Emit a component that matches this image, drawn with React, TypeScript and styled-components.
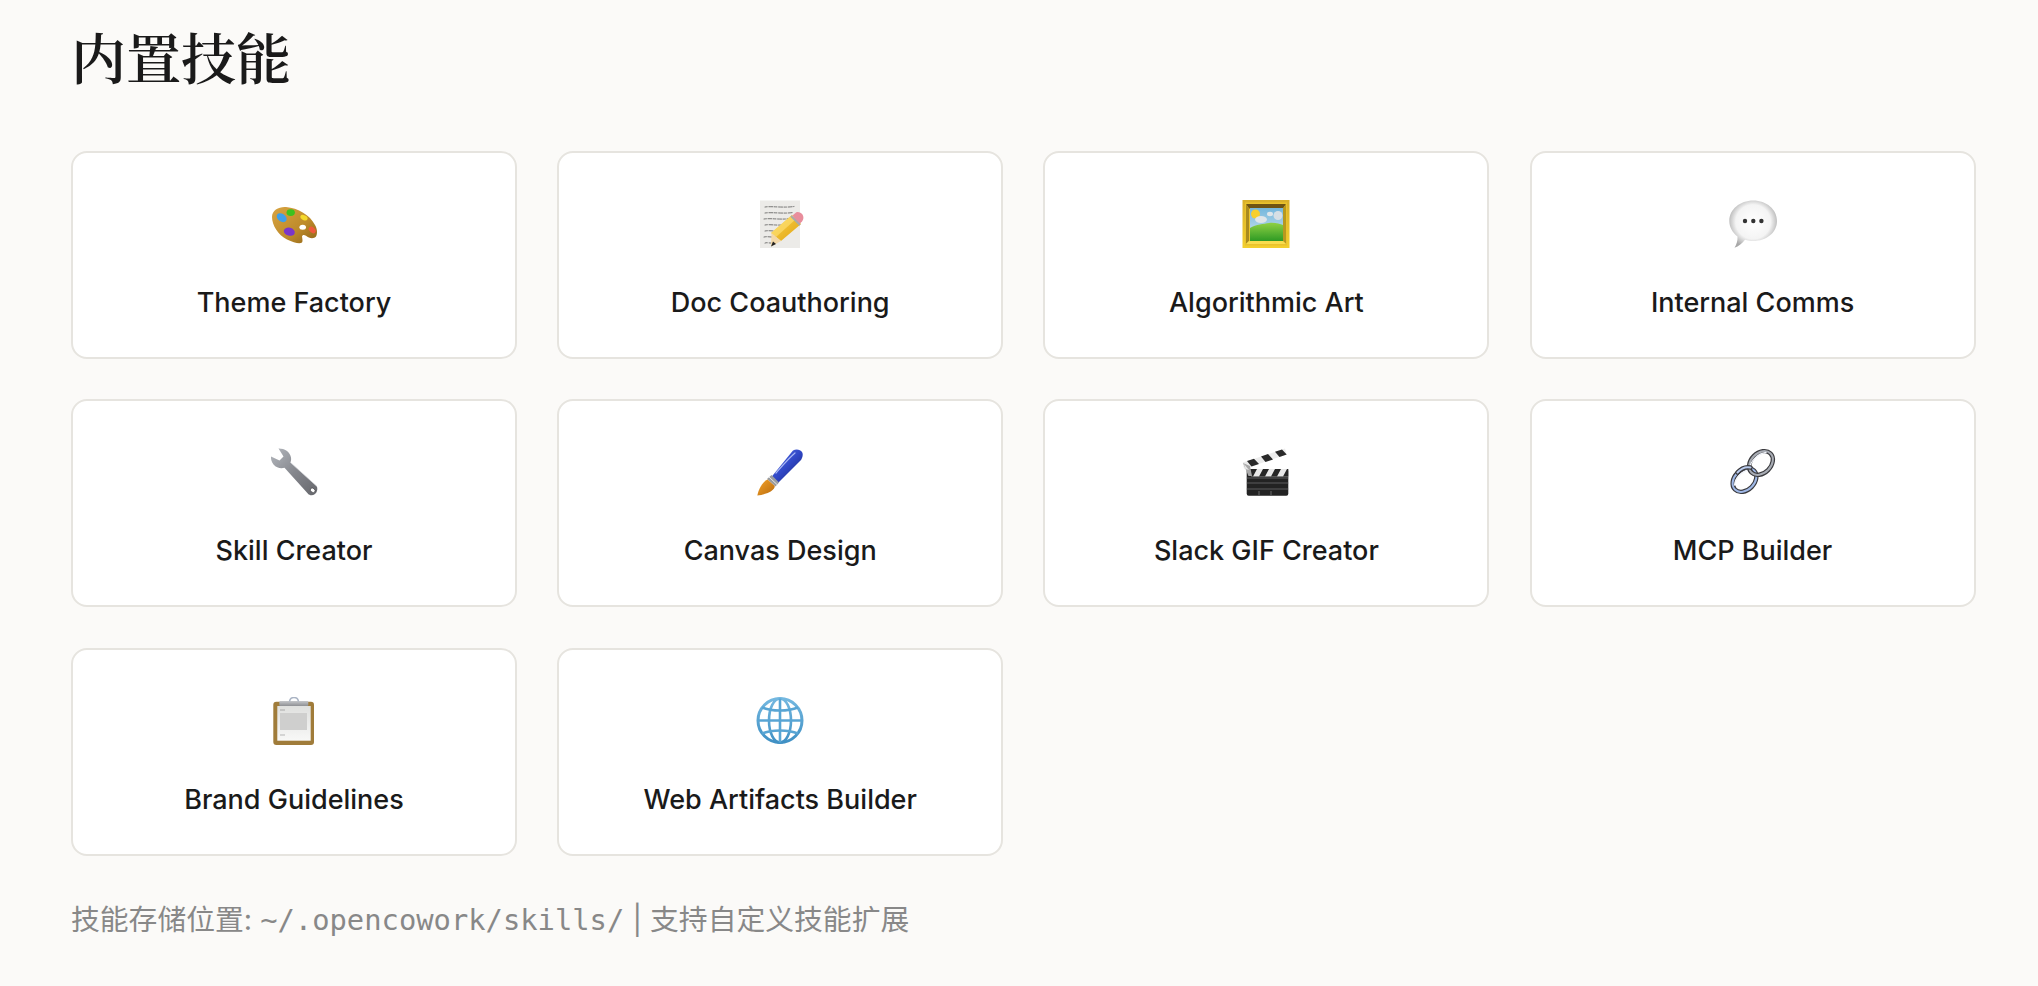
import { ReactNode } from 'react';
import styled, { createGlobalStyle } from 'styled-components';

const GlobalStyle = createGlobalStyle`
  html, body {
    margin: 0;
    padding: 0;
    background: #fbfaf8;
  }
`;

const Palette = () => (
  <svg viewBox="0 0 48 48" width="48" height="48">
    <defs>
      <linearGradient id="wood" x1="0" y1="0" x2="1" y2="1">
        <stop offset="0" stopColor="#d9a441" />
        <stop offset="0.6" stopColor="#bd8a2a" />
        <stop offset="1" stopColor="#8f6518" />
      </linearGradient>
    </defs>
    <path
      d="M2 17C2 10 9 6.500 16 7C28 8 40 15 45 25C47.500 29 47.500 34 46 36.500C44 39 39 38.500 36 35.800C34 34.500 32.500 34.800 32 36.500C32.300 39 33 41 32 42.500C30 44 24 43 17 39.500C8 35 2 25 2 17Z"
      fill="url(#wood)"
    />
    <ellipse cx="11.700" cy="17.700" rx="5.500" ry="3.800" transform="rotate(35 11.700 17.700)" fill="#3f9fe8" />
    <ellipse cx="20.700" cy="12.600" rx="4.200" ry="3.400" fill="#3cc21e" />
    <ellipse cx="34" cy="17.700" rx="3.800" ry="2.400" transform="rotate(25 34 17.700)" fill="#f4d92c" />
    <ellipse cx="32.700" cy="27.300" rx="3.300" ry="2.500" fill="#ffffff" />
    <ellipse cx="42.300" cy="30" rx="3.900" ry="2.700" transform="rotate(40 42.300 30)" fill="#ef5a3c" />
    <ellipse cx="19.300" cy="31.700" rx="5.600" ry="4" transform="rotate(15 19.300 31.700)" fill="#7b36c8" />
  </svg>
);

const Memo = () => (
  <svg viewBox="0 0 48 48" width="48" height="48">
    <defs>
      <linearGradient id="pencilBody" x1="0" y1="0" x2="1" y2="1">
        <stop offset="0" stopColor="#fbd44a" />
        <stop offset="1" stopColor="#e0a313" />
      </linearGradient>
    </defs>
    <rect x="4" y="0.500" width="40" height="47.500" fill="#ecebe8" />
    <g stroke="#3f3f3f" strokeWidth="0.800" strokeLinecap="round" strokeDasharray="2.500 1.600 4 1.400" fill="none" opacity="0.850">
      <path d="M9 7C15 6 28 8 38 6.500" />
      <path d="M9 13C16 12 28 14 37 12.500" />
      <path d="M8 19C16 18 24 20 35 18.500" />
      <path d="M9 25C14 24 22 26 30 24.500" />
      <path d="M9 31C14 30 20 32 26 30.500" />
      <path d="M8 37C12 36 17 38 22 36.500" />
      <path d="M9 43C11 42 15 44 18 42.500" />
    </g>
    <path d="M36 15L45 24L25 41L15 33Z" fill="url(#pencilBody)" />
    <path d="M36 15L40 19L20 37L15 33Z" fill="#ffe27a" opacity="0.600" />
    <path d="M15.500 33L25 41L15 46.500Z" fill="#f3d8a8" />
    <path d="M17 41.500L20 44L15 46.500Z" fill="#222" />
    <path d="M36.500 15.500L40 12.500C42 11.500 45 12.500 46.500 14.500C47.800 16.500 47.800 19.500 46 21.500L43 24.500Z" fill="#e88d9c" />
    <path d="M35 16L44 25" stroke="#a9a9a9" strokeWidth="2" />
  </svg>
);

const Framed = () => (
  <svg viewBox="0 0 48 48" width="48" height="48">
    <defs>
      <linearGradient id="sky" x1="0" y1="0" x2="0" y2="1">
        <stop offset="0" stopColor="#74b7dd" />
        <stop offset="1" stopColor="#d5e6ee" />
      </linearGradient>
      <linearGradient id="grass" x1="0" y1="0" x2="0" y2="1">
        <stop offset="0" stopColor="#8fd044" />
        <stop offset="1" stopColor="#2e9a24" />
      </linearGradient>
      <linearGradient id="gold" x1="0" y1="0" x2="0" y2="1">
        <stop offset="0" stopColor="#d9b02a" />
        <stop offset="1" stopColor="#f3cf2e" />
      </linearGradient>
    </defs>
    <rect x="0.500" y="0" width="47" height="48" fill="url(#gold)" />
    <rect x="3" y="2.500" width="42" height="43" fill="#e9c22c" />
    <path d="M4 4H44L41 8.500H7Z" fill="#6f5413" />
    <path d="M4 4V44L7 41V8.500Z" fill="#a98a1e" />
    <path d="M44 4V44L41 41V8.500Z" fill="#b8981f" />
    <path d="M4 44H44L41 41H7Z" fill="#f8dc4e" />
    <rect x="8" y="8" width="33" height="33" fill="url(#sky)" />
    <circle cx="13.500" cy="14" r="4.500" fill="#f7cf2c" />
    <ellipse cx="19" cy="19.500" rx="6" ry="3.500" fill="#dfe5e9" />
    <ellipse cx="28" cy="14" rx="3" ry="2.200" fill="#dfe6ea" />
    <ellipse cx="36" cy="15.500" rx="4.500" ry="4.500" fill="#d6dfe5" />
    <path d="M8 28C14 24 22 24 27 23C32 22 38 24 41 25V41H8Z" fill="url(#grass)" />
  </svg>
);

const Speech = () => (
  <svg viewBox="0 0 48 48" width="48" height="48">
    <defs>
      <radialGradient id="bubble" cx="0.500" cy="0.450" r="0.560">
        <stop offset="0" stopColor="#ffffff" />
        <stop offset="0.650" stopColor="#f4f4f4" />
        <stop offset="1" stopColor="#a8a8a8" />
      </radialGradient>
    </defs>
    <path
      d="M24.200 0.600C37.500 0.600 48 9.500 48 21C48 32.500 37.500 41 24.200 41C21.500 41 18.500 40.700 16 39.800C13.500 43 9.500 46.500 5.500 47.800C7.500 44.500 8.800 40.500 8.500 36.500C3.500 32.500 0.300 27 0.300 21C0.300 9.500 11 0.600 24.200 0.600Z"
      fill="url(#bubble)"
    />
    <circle cx="16" cy="21" r="2.200" fill="#333" />
    <circle cx="24.300" cy="21" r="2.200" fill="#333" />
    <circle cx="32.400" cy="21" r="2.200" fill="#333" />
  </svg>
);

const Wrench = () => (
  <svg viewBox="0 0 48 48" width="48" height="48">
    <defs>
      <linearGradient id="steel" x1="0" y1="0" x2="1" y2="1">
        <stop offset="0" stopColor="#b4b8be" />
        <stop offset="0.500" stopColor="#85878d" />
        <stop offset="1" stopColor="#66676c" />
      </linearGradient>
    </defs>
    <path
      d="M8.500 0.500C14 0.300 20 3.500 21 9.500C21.300 11.500 21 13 20.500 14.500L46.500 38C48 40 47.500 44 45 46C42.500 48 39.500 47.500 38 45.800L14.500 19.800C11 21 6.500 20 3.500 16.500C1.500 14 0.800 11 1 8.500L9.500 12.500L13.500 8.500Z"
      fill="url(#steel)"
    />
    <path d="M20.500 14.500L46.500 38" stroke="#d6d8dc" strokeWidth="1" opacity="0.700" />
    <ellipse cx="42.700" cy="42.300" rx="2.600" ry="2" transform="rotate(40 42.700 42.300)" fill="#fff" stroke="#3c3c3f" strokeWidth="0.600" />
  </svg>
);

const Brush = () => (
  <svg viewBox="0 0 48 48" width="48" height="48">
    <defs>
      <linearGradient id="handle" x1="0" y1="0" x2="1" y2="1">
        <stop offset="0" stopColor="#5b78ea" />
        <stop offset="0.500" stopColor="#3047c6" />
        <stop offset="1" stopColor="#15206f" />
      </linearGradient>
      <linearGradient id="bristle" x1="0" y1="0" x2="1" y2="1">
        <stop offset="0" stopColor="#f4a32c" />
        <stop offset="1" stopColor="#b86a0c" />
      </linearGradient>
    </defs>
    <path d="M37 2.500C40 0.800 44.500 1.500 46 4C47.500 6.500 46.500 10 44.500 12.500L21.500 35.500L15 29.500Z" fill="url(#handle)" />
    <path d="M39 5C33 10 27 17 20 25" stroke="#c7d2ff" strokeWidth="1.200" fill="none" opacity="0.800" strokeLinecap="round" />
    <path d="M15.500 27L23 34.500L19.500 38.500L11 31Z" fill="#9a9c9f" />
    <path d="M13 29L21 36.500" stroke="#e7e7e7" strokeWidth="1" />
    <path d="M11.500 31.500L18.800 38C18.500 41.500 14.500 44 10 45.500C7 46.500 3.500 47.500 1.300 47.500C1.800 45 3 41 5 38C7 35 9 32.500 11.500 31.500Z" fill="url(#bristle)" />
  </svg>
);

const Clapper = () => (
  <svg viewBox="0 0 48 48" width="48" height="48">
    <rect x="4.700" y="21" width="41.600" height="26.700" rx="2" fill="#232323" />
    <path d="M4.700 30H46.300M4.700 35H46.300M4.700 41H46.300" stroke="#77777a" strokeWidth="0.700" />
    <path d="M17 43V47M29 43V47" stroke="#8a8a8a" strokeWidth="0.700" />
    <rect x="9" y="21" width="37.300" height="7.500" fill="#e8e8e8" />
    <path d="M9 21H15L11 28.500H9ZM21 21H27L23 28.500H17ZM33 21H39L35 28.500H29ZM45 21H46.300V28.500H41Z" fill="#262626" />
    <path d="M0.700 14.500L43 0.500L44.700 6.500L2 21Z" fill="#ececec" />
    <path d="M5 13L12 10.700L17 16L9.500 18.500ZM19 8.400L26 6L31 11.500L23.500 14ZM33 3.700L40 1.400L44.700 6.500L37.500 9Z" fill="#2a2a2a" />
    <path d="M1 15L8 18L10 28H6.500Z" fill="#a8a8a8" />
    <path d="M2 16L7 22L3.500 21Z" fill="#e8e8e8" />
  </svg>
);

const LinkRings = () => (
  <svg viewBox="0 0 48 48" width="48" height="48">
    <g fill="none">
      <ellipse cx="15.500" cy="32" rx="13.500" ry="10" transform="rotate(-45 15.500 32)" stroke="#3a3a3e" strokeWidth="4.400" />
      <ellipse cx="15.500" cy="32" rx="13.500" ry="10" transform="rotate(-45 15.500 32)" stroke="#9fb8e6" strokeWidth="2" />
      <path d="M5.500 37C6 30 13 23 21 21.500" stroke="#f2f5fb" strokeWidth="1.300" strokeLinecap="round" />
      <ellipse cx="32" cy="15" rx="13.500" ry="10" transform="rotate(-45 32 15)" stroke="#3a3a3e" strokeWidth="4.400" />
      <ellipse cx="32" cy="15" rx="13.500" ry="10" transform="rotate(-45 32 15)" stroke="#a8acb4" strokeWidth="2" />
      <path d="M20.500 21C21 13 29 5.500 37 4.500" stroke="#f2f5fb" strokeWidth="1.300" strokeLinecap="round" />
      <path d="M8.500 24.500C12 20.500 17 18.500 21.500 19.500" stroke="#3a3a3e" strokeWidth="4.400" strokeLinecap="round" />
      <path d="M8.500 24.500C12 20.500 17 18.500 21.500 19.500" stroke="#b9cbee" strokeWidth="2" strokeLinecap="round" />
    </g>
  </svg>
);

const Clipboard = () => (
  <svg viewBox="0 0 48 48" width="48" height="48">
    <defs>
      <linearGradient id="sheet" x1="0" y1="0" x2="0" y2="1">
        <stop offset="0" stopColor="#dfe0de" />
        <stop offset="1" stopColor="#f8f8f7" />
      </linearGradient>
      <linearGradient id="clip" x1="0" y1="0" x2="0" y2="1">
        <stop offset="0" stopColor="#c5c7ca" />
        <stop offset="1" stopColor="#8e9094" />
      </linearGradient>
    </defs>
    <rect x="3.300" y="4.700" width="40.700" height="43.300" rx="3" fill="#a07c3a" />
    <rect x="7.300" y="9" width="33.400" height="34.700" fill="url(#sheet)" />
    <rect x="9.300" y="4" width="29" height="5" rx="1" fill="url(#clip)" />
    <path d="M19.500 4.500C20 1.500 22 0.500 24 0.500C26 0.500 28 1.500 28.500 4.500" fill="none" stroke="#aab4c4" strokeWidth="1.500" />
    <path d="M10 13H15" stroke="#aaa" strokeWidth="1" />
    <rect x="10" y="16" width="27" height="17" fill="#cfcfce" />
    <path d="M10 38H15" stroke="#b5b5b5" strokeWidth="1" />
  </svg>
);

const Globe = () => (
  <svg viewBox="0 0 48 48" width="48" height="48">
    <defs>
      <linearGradient id="globeLine" x1="0" y1="0" x2="0" y2="1">
        <stop offset="0" stopColor="#74b8e0" />
        <stop offset="1" stopColor="#3f90c4" />
      </linearGradient>
    </defs>
    <g fill="none" stroke="url(#globeLine)" strokeWidth="2.600">
      <circle cx="24" cy="23.500" r="22" strokeWidth="3" />
      <ellipse cx="24" cy="23.500" rx="11" ry="22" />
    </g>
    <g fill="none" stroke="#58a5d4" strokeWidth="2.600">
      <path d="M24 1.500V45.500" />
      <path d="M2 23.500H46" />
      <path d="M6 10.500C16 14.500 32 14.500 42 10.500" />
      <path d="M6 36.500C16 32.500 32 32.500 42 36.500" />
    </g>
  </svg>
);

const skills: { name: string; icon: ReactNode }[] = [
  { name: 'Theme Factory', icon: <Palette /> },
  { name: 'Doc Coauthoring', icon: <Memo /> },
  { name: 'Algorithmic Art', icon: <Framed /> },
  { name: 'Internal Comms', icon: <Speech /> },
  { name: 'Skill Creator', icon: <Wrench /> },
  { name: 'Canvas Design', icon: <Brush /> },
  { name: 'Slack GIF Creator', icon: <Clapper /> },
  { name: 'MCP Builder', icon: <LinkRings /> },
  { name: 'Brand Guidelines', icon: <Clipboard /> },
  { name: 'Web Artifacts Builder', icon: <Globe /> },
];

const App = () => {
  return (
    <Page>
      <GlobalStyle />
      <Title>内置技能</Title>
      <Grid>
        {skills.map((skill) => (
          <Card key={skill.name}>
            <IconSlot>{skill.icon}</IconSlot>
            <Name>{skill.name}</Name>
          </Card>
        ))}
      </Grid>
      <Footnote>
        技能存储位置: <Path>~/.opencowork/skills/</Path> | 支持自定义技能扩展
      </Footnote>
    </Page>
  );
};

const Page = styled.main`
  box-sizing: border-box;
  height: 986px;
  padding: 0 62px 0 71px;
  overflow: hidden;
  background: #fbfaf8;
  font-family: Inter, 'Noto Sans CJK SC', sans-serif;
`;

const Title = styled.h1`
  margin: 0;
  padding: 26px 0 0;
  height: 150.5px;
  box-sizing: border-box;
  font-family: 'Liberation Serif', 'Noto Serif CJK SC', serif;
  font-size: 55px;
  font-weight: 600;
  line-height: 70px;
  color: #1a1a1a;
`;

const Grid = styled.div`
  display: grid;
  grid-template-columns: repeat(4, 446px);
  grid-auto-rows: 208px;
  gap: 40.5px 40.2px;
`;

const Card = styled.div`
  box-sizing: border-box;
  display: flex;
  flex-direction: column;
  align-items: center;
  padding-top: 47px;
  background: #ffffff;
  border: 2px solid #e6e4df;
  border-radius: 16px;
`;

const IconSlot = styled.div`
  width: 48px;
  height: 48px;
  margin-bottom: 37px;

  svg {
    display: block;
    filter: blur(0.4px);
  }
`;

const Name = styled.div`
  font-size: 27px;
  font-weight: 500;
  line-height: 36px;
  color: #1a1a1a;
`;

const Footnote = styled.p`
  margin: 43px 0 0;
  font-size: 28.8px;
  line-height: 42px;
  color: #888888;
`;

const Path = styled.code`
  font-family: 'DejaVu Sans Mono', monospace;
`;

export default App;
